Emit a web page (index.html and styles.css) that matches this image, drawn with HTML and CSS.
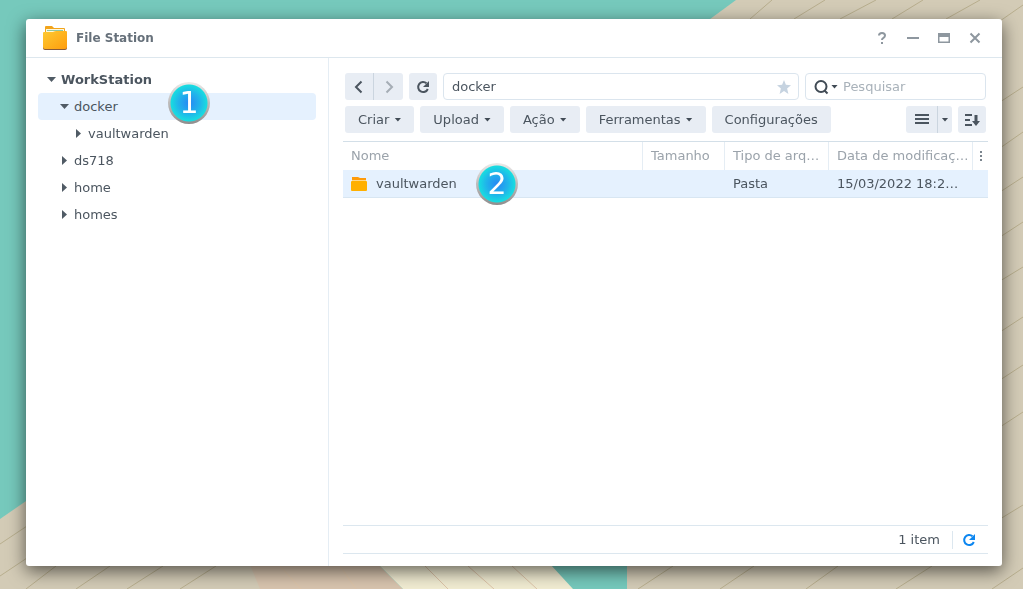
FILE: index.html
```html
<!DOCTYPE html>
<html lang="pt">
<head>
<meta charset="utf-8">
<title>File Station</title>
<link rel="stylesheet" href="styles.css">
</head>
<body>
<svg class="wallpaper" viewBox="0 0 1023 589" preserveAspectRatio="none" aria-hidden="true">
  <rect width="1023" height="589" fill="#76c9bc"/>
  <path fill="#d3cbb6" d="M736 0H1023V589H627V80Z"/>
  <path fill="#d3cbb6" d="M0 519L100 450H300V589H0Z"/>
  <path fill="#d8c4ae" d="M240 540H354L403 589H260Z"/>
  <path fill="#f1ecd2" d="M354 540H528L573 589H403Z"/>
  <g stroke="#b8ae8e" stroke-width="1" fill="none">
    <path d="M0 544L30 524M0 576L30 556M26 589L56 566M76 589L110 566M127 589L163 566M180 589L216 566M720 589L754 566M806 589L838 566M896 589L932 566M992 589L1023 568M638 589L673 566M750 19L772 0M794 19L825 0M840 19L876 0M892 19L923 0M946 19L980 0M1000 21L1023 5M1000 102L1023 87M1000 148L1023 132M1000 192L1023 177M1000 237L1023 222M1000 281L1023 267M1000 332L1023 317M1000 380L1023 365M1000 427L1023 412M1000 519L1023 505"/>
    <path stroke="#ddc4a8" d="M280 566L301 589M340 566L356 589M425 566L448 589M468 566L494 589M512 566L537 589"/>
  </g>
</svg>

<div class="window">
  <header class="titlebar">
    <svg class="app-icon" viewBox="0 0 24 24" aria-hidden="true">
      <defs><linearGradient id="folder" x1="0" y1="0" x2="1" y2="1"><stop offset="0" stop-color="#fdca32"/><stop offset="1" stop-color="#ff9d0d"/></linearGradient></defs>
      <path fill="#f2a41b" d="M2 1q0-1 1-1h6l2 2h10q1 0 1 1v8H2z"/>
      <path fill="#fff8dc" d="M3 3h18v5H3z"/>
      <path stroke="#8fc6a2" d="M4 4.500h16"/>
      <path fill="#8a5a38" d="M0 12h24v10q0 2-2 2H2q-2 0-2-2z"/>
      <path fill="url(#folder)" d="M0 7q0-1 1-1h8q1 0 2-.5t2-.5h10q1 0 1 1v15q0 2-2 2H2q-2 0-2-2z"/>
    </svg>
    <h1 class="title">File Station</h1>
    <div class="window-controls">
      <button class="control" aria-label="Ajuda"><svg viewBox="0 0 12 12"><path d="M3 3.500Q3 1 6 1T9 3.500Q9 5 7.500 5.800T6 8M6 10v2"/></svg></button>
      <button class="control" aria-label="Minimizar"><svg viewBox="0 0 12 12"><path d="M0 6h12"/></svg></button>
      <button class="control" aria-label="Maximizar"><svg viewBox="0 0 12 12"><path fill="#8e979f" stroke="none" fill-rule="evenodd" d="M0 1h12v10H0zM1.500 5v4.500h9V5z"/></svg></button>
      <button class="control" aria-label="Fechar"><svg viewBox="0 0 12 12"><path d="M1.500 1.500l9 9M10.500 1.500l-9 9"/></svg></button>
    </div>
  </header>

  <div class="body">
    <nav class="sidebar">
      <ul class="tree">
        <li><button class="node root"><span class="caret"></span>WorkStation</button>
          <ul class="tree">
            <li><button class="node level-1 selected"><span class="caret"></span>docker<span class="badge badge-tree">1</span></button>
              <ul class="tree">
                <li><button class="node level-2"><span class="caret closed"></span>vaultwarden</button></li>
              </ul>
            </li>
            <li><button class="node level-1"><span class="caret closed"></span>ds718</button></li>
            <li><button class="node level-1"><span class="caret closed"></span>home</button></li>
            <li><button class="node level-1"><span class="caret closed"></span>homes</button></li>
          </ul>
        </li>
      </ul>
    </nav>

    <main class="main">
      <div class="bar">
        <div class="split">
          <button class="button square" aria-label="Voltar"><svg class="icon" viewBox="0 0 14 14"><path d="M9.500 1.500L4 7l5.500 5.500"/></svg></button>
          <button class="button square muted" aria-label="Avançar"><svg class="icon" viewBox="0 0 14 14"><path d="M4.500 1.500L10 7l-5.500 5.500"/></svg></button>
        </div>
        <button class="button square" aria-label="Atualizar"><svg class="icon" viewBox="0 0 14 14"><path d="M10.500 3.300A5 5 0 1 0 11.800 9"/><path class="solid" d="M13 1v6H7z"/></svg></button>
        <div class="field path">
          <input class="input" type="text" value="docker" aria-label="Caminho">
          <button class="star" aria-label="Favorito"><svg class="icon-star" viewBox="0 0 14 14"><path d="M7 0l1.900 4.800 5.100.4-3.900 3.300L11.400 14 7 11 2.600 14l1.300-5.500L0 5.200l5.100-.4z"/></svg></button>
        </div>
        <div class="field search">
          <svg class="icon-search" viewBox="0 0 16 16" aria-hidden="true"><circle cx="7" cy="7.500" r="5.500"/><path d="M10.500 11.500l3 3"/></svg>
          <span class="drop"></span>
          <input class="input" type="search" placeholder="Pesquisar" aria-label="Pesquisar">
        </div>
      </div>

      <div class="bar actions">
        <button class="button">Criar<span class="drop"></span></button>
        <button class="button">Upload<span class="drop"></span></button>
        <button class="button">Ação<span class="drop"></span></button>
        <button class="button">Ferramentas<span class="drop"></span></button>
        <button class="button">Configurações</button>
        <div class="split views">
          <button class="button list" aria-label="Lista"><svg class="icon-list" viewBox="0 0 14 12"><path d="M0 1h14M0 5h14M0 9h14"/></svg></button>
          <button class="button narrow" aria-label="Modo de exibição"><span class="drop"></span></button>
        </div>
        <button class="button square" aria-label="Ordenar"><svg class="icon-sort" viewBox="0 0 16 14"><path d="M1 2h7M1 7h5M1 12h7"/><path class="solid" d="M10.500 2h3v6h2.500L12 13 8 8h2.500z"/></svg></button>
      </div>

      <div class="files">
        <table class="table">
          <colgroup><col><col class="col-size"><col class="col-type"><col class="col-date"><col class="col-menu"></colgroup>
          <thead>
            <tr><th>Nome</th><th>Tamanho</th><th>Tipo de arq…</th><th>Data de modificaç…</th><th class="menu"><button class="more" aria-label="Colunas"><svg class="icon-more" viewBox="0 0 2 10"><path d="M0 0h2v2H0zM0 4h2v2H0zM0 8h2v2H0z"/></svg></button></th></tr>
          </thead>
          <tbody>
            <tr>
              <td><div class="name"><svg class="icon-folder" viewBox="0 0 16 14" aria-hidden="true"><path fill="#ff9b0a" d="M1 0h6l2 1h6v3H1z"/><path fill="#ffd98a" d="M1 3h14v2H1z"/><path fill="#ffb000" d="M0 5q0-1 1-1h14q1 0 1 1v8q0 1-1 1H1q-1 0-1-1z"/></svg>vaultwarden<span class="badge badge-file">2</span></div></td>
              <td></td><td>Pasta</td><td>15/03/2022 18:2…</td><td></td>
            </tr>
          </tbody>
        </table>
      </div>

      <footer class="status">
        <span class="count">1 item</span>
        <button class="reload" aria-label="Recarregar"><svg class="icon" viewBox="0 0 14 14"><path d="M10.500 3.300A5 5 0 1 0 11.800 9"/><path class="solid" d="M13 1v6H7z"/></svg></button>
      </footer>
    </main>
  </div>
</div>
</body>
</html>
```
FILE: styles.css
```css
* { box-sizing: border-box; }

body {
  margin: 0;
  height: 100vh;
  padding: 19px 21px 23px 26px;
  overflow: hidden;
  color: #4b555f;
  font: 13px/20px "DejaVu Sans", Verdana, sans-serif;
}

button, input { margin: 0; padding: 0; border: 0; background: none; color: inherit; font: inherit; }
svg { display: block; flex: none; }

.wallpaper { position: fixed; z-index: -1; top: 0; left: 0; width: 100%; height: 100%; }

.window {
  display: flex;
  flex-direction: column;
  height: 100%;
  border-radius: 3px;
  background: #fff;
  box-shadow: 0 5px 18px rgba(0, 0, 0, 0.6);
}

.titlebar {
  display: flex;
  align-items: center;
  height: 39px;
  padding: 0 21px 0 17px;
  border-bottom: 1px solid #dde7ee;
}
.app-icon { width: 24px; height: 24px; }
.title { margin: 0 0 0 9px; color: #66707a; font-size: 12px; line-height: 20px; }
.window-controls { display: flex; gap: 19px; margin-left: auto; }
.control { width: 12px; height: 12px; }
.control svg { width: 12px; height: 12px; fill: none; stroke: #8e979f; stroke-width: 2; }

.body { display: flex; flex: 1; min-height: 0; }

.sidebar { flex: none; width: 303px; padding: 8px 12px; border-right: 1px solid #e5edf4; }
.tree { margin: 0; padding: 0; list-style: none; }
.node {
  position: relative;
  display: flex;
  align-items: center;
  gap: 5px;
  width: 100%;
  height: 27px;
  padding-left: 9px;
  border-radius: 4px;
  text-align: left;
}
.root { font-weight: bold; }
.level-1 { padding-left: 22px; }
.level-2 { padding-left: 36px; }
.selected { background: #e5f1fe; }
.caret { width: 9px; height: 5px; background: #505b65; clip-path: polygon(0 0, 100% 0, 50% 100%); }
.caret.closed { width: 5px; height: 9px; margin: 0 2px; clip-path: polygon(0 0, 100% 50%, 0 100%); }

.badge {
  position: absolute;
  top: -11px;
  display: grid;
  place-items: center;
  width: 42px;
  height: 42px;
  border-radius: 50%;
  background: radial-gradient(circle, #2688f4 0, #20b5ea 11px, #18dce0 18px, transparent 19px), linear-gradient(#eceae9, #8f8d8d);
  color: #fff;
  font-size: 30px;
  line-height: 30px;
}
.badge-tree { left: 130px; }
.badge-file { left: 125px; }

.main { display: flex; flex: 1; flex-direction: column; min-width: 0; padding: 15px 14px 12px; }

.bar { display: flex; gap: 6px; padding: 0 2px; }
.actions { margin: 6px 0 8px; }
.button {
  display: flex;
  align-items: center;
  justify-content: center;
  gap: 5px;
  height: 27px;
  padding: 0 13px;
  border-radius: 3px;
  background: #e8edf4;
}
.square { width: 28px; padding: 0; }
.list { width: 32px; padding: 0; }
.narrow { width: 14px; padding: 0; }
.split { display: flex; }
.split .square { width: 29px; }
.split .button:first-child { border-right: 1px solid #cbd5df; border-radius: 3px 0 0 3px; }
.split .button:last-child { border-radius: 0 3px 3px 0; }
.views { margin-left: auto; }
.split .muted { color: #a5adb5; }
.drop { flex: none; width: 7px; height: 4px; background: #414b55; clip-path: polygon(0 0, 100% 0, 50% 100%); }

.icon { width: 14px; height: 14px; fill: none; stroke: currentColor; stroke-width: 2; }
.icon .solid, .icon-sort .solid { fill: currentColor; stroke: none; }
.icon-list { width: 14px; height: 12px; stroke: currentColor; stroke-width: 2; }
.icon-sort { width: 16px; height: 14px; fill: none; stroke: currentColor; stroke-width: 2; }

.field {
  display: flex;
  align-items: center;
  height: 27px;
  border: 1px solid #dbe5ee;
  border-radius: 4px;
  background: #fff;
}
.path { flex: 1; padding: 0 7px 0 8px; }
.search { width: 181px; padding-left: 8px; }
.search .drop { margin: 0 5px 0 1px; }
.input { flex: 1; min-width: 0; height: 25px; outline: 0; }
.input::placeholder { color: #a9b2ba; opacity: 1; }
.icon-star { width: 14px; height: 14px; fill: #c6d3e0; }
.icon-search { width: 16px; height: 16px; fill: none; stroke: #414b55; stroke-width: 2; }

.files { flex: 1; border-top: 1px solid #d3dfe8; }
.table { width: 100%; border-collapse: separate; border-spacing: 0; table-layout: fixed; }
.col-size { width: 82px; }
.col-type { width: 104px; }
.col-date { width: 144px; }
.col-menu { width: 15px; }
th, td { height: 28px; padding: 0 2px 0 8px; overflow: hidden; text-align: left; white-space: nowrap; }
th { border-right: 1px solid #e5edf4; color: #9ba3ab; font-weight: normal; }
th.menu { padding: 0; border-right: 0; }
td { background: #e5f1fe; border-bottom: 1px solid #d8e6f2; }
td:first-child { overflow: visible; }
.name { position: relative; display: flex; align-items: center; gap: 9px; height: 20px; }
.more { display: grid; place-items: center; width: 100%; height: 27px; }
.icon-more { width: 2px; height: 10px; fill: #7b858e; }
.icon-folder { width: 16px; height: 14px; }

.status { display: flex; align-items: center; justify-content: flex-end; height: 29px; border: solid #dce7ef; border-width: 1px 0; }
.count { margin-right: 12px; }
.reload { padding: 2px 12px 2px 9px; border-left: 1px solid #dce7ef; color: #0c86f0; }
```
